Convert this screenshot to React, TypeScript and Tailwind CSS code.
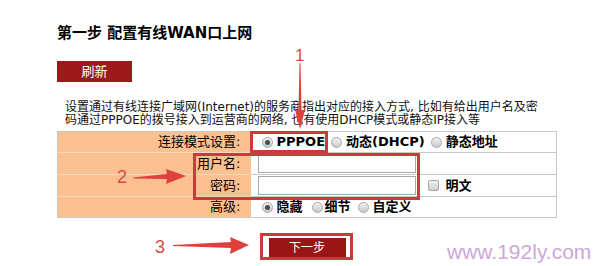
import React from 'react';

const font = { fontFamily: '"DejaVu Sans", "Noto Sans CJK SC", sans-serif' };

const Radio: React.FC<{ checked?: boolean; gap?: string }> = ({ checked, gap = 'mr-[4px]' }) => (
  <span className={`inline-flex w-[11px] h-[11px] rounded-full border border-[#a9a9a9] bg-gradient-to-b from-[#f2f2f2] to-[#c9c9c9] items-center justify-center shrink-0 ${gap}`}>
    {checked && <span className="w-[5px] h-[5px] rounded-full bg-[#4a4a4a]" />}
  </span>
);

const App: React.FC = () => {
  return (
    <div className="relative w-[600px] h-[266px] bg-white overflow-hidden pl-[57px] text-black" style={font}>
      <h1 className="pt-[23px] text-[15px] font-bold leading-[20px]">第一步 配置有线WAN口上网</h1>

      <button className="mt-[18px] w-[75px] h-[21px] bg-[#9c1a1a] text-white text-[13px] leading-[21px] flex items-center justify-center">
        刷新
      </button>

      <p className="mt-[19px] pl-[8px] text-[12px] leading-[13px] text-[#111]">
        设置通过有线连接广域网(Internet)的服务商指出对应的接入方式, 比如有给出用户名及密
        <br />
        码通过PPPOE的拨号接入到运营商的网络, 也有使用DHCP模式或静态IP接入等
      </p>

      <table className="mt-[4px] w-[500px] border-collapse border border-[#c8c8c8] text-[13px]">
        <tbody>
          <tr className="h-[21px]">
            <td className="w-[193px] bg-[#fbc08f] text-right pr-[10px] border-b border-[#f4d8c0]">连接模式设置:</td>
            <td className="border-b border-[#c8c8c8] pl-[11px]">
              <div className="flex items-center font-bold">
                <Radio checked />
                <span className="mr-[6px]">PPPOE</span>
                <Radio />
                <span className="mr-[6px]">动态(DHCP)</span>
                <Radio />
                <span>静态地址</span>
              </div>
            </td>
          </tr>
          <tr className="h-[22px]">
            <td className="bg-[#fbc08f] text-right pr-[10px] border-b border-[#f4d8c0]">用户名:</td>
            <td className="border-b border-[#c8c8c8] pl-[7px]">
              <div className="w-[158px] h-[18px] border border-[#a8a8a8] bg-white" />
            </td>
          </tr>
          <tr className="h-[22px]">
            <td className="bg-[#fbc08f] text-right pr-[10px] border-b border-[#f4d8c0]">密码:</td>
            <td className="border-b border-[#c8c8c8] pl-[7px]">
              <div className="flex items-center">
                <div className="w-[158px] h-[19px] border border-[#a8a8a8] bg-white" />
                <span className="ml-[12px] w-[11px] h-[11px] rounded-[2px] border border-[#a9a9a9] bg-gradient-to-b from-[#f2f2f2] to-[#cfcfcf]" />
                <span className="ml-[7px] font-bold">明文</span>
              </div>
            </td>
          </tr>
          <tr className="h-[21px]">
            <td className="bg-[#fbc08f] text-right pr-[10px]">高级:</td>
            <td className="pl-[11px]">
              <div className="flex items-center font-bold">
                <Radio checked />
                <span className="mr-[9px]">隐藏</span>
                <Radio gap="mr-[2px]" />
                <span className="mr-[7px]">细节</span>
                <Radio />
                <span>自定义</span>
              </div>
            </td>
          </tr>
        </tbody>
      </table>

      <div className="w-[500px] flex justify-center mt-[20px]">
        <button className="w-[77px] h-[20px] bg-[#9a1616] text-white text-[12px] flex items-center justify-center">
          下一步
        </button>
      </div>

      {/* annotations */}
      <div className="absolute left-[250px] top-[131px] w-[78px] h-[22px] border-[3px] border-[#cc3b3b]" />
      <div className="absolute left-[193px] top-[153px] w-[227px] h-[47px] border-[3px] border-[#cc3b3b]" />
      <div className="absolute left-[260px] top-[233px] w-[93px] h-[27px] border-[3px] border-[#cc3b3b]" />

      <span className="absolute left-[295px] top-[46px] text-[17px] leading-[20px] text-[#d84a48]" style={{ fontFamily: '"Liberation Sans", sans-serif' }}>1</span>
      <span className="absolute left-[117px] top-[167px] text-[18px] leading-[20px] text-[#d84a48]" style={{ fontFamily: '"Liberation Sans", sans-serif' }}>2</span>
      <span className="absolute left-[155px] top-[237px] text-[18px] leading-[20px] text-[#d84a48]" style={{ fontFamily: '"Liberation Sans", sans-serif' }}>3</span>

      <svg className="absolute inset-0 pointer-events-none" width="600" height="266">
        <polygon points="299.5,63 300.5,63 301.5,110 305,110 300,129 295,110 298.5,110" fill="#e0403c" />
        <polygon points="133,177.5 133,178.5 167,179 166,184 186,176 166,169 167,174" fill="#e0403c" />
        <polygon points="173,245 173,246 231,248 230,254 249,245 230,237 231,242" fill="#e0403c" />
      </svg>

      <span className="absolute left-[447px] top-[240px] text-[21px] leading-[24px] text-[#cfa6d8]" style={{ fontFamily: '"Liberation Sans", sans-serif' }}>
        www.192ly.com
      </span>
    </div>
  );
};

export default App;
